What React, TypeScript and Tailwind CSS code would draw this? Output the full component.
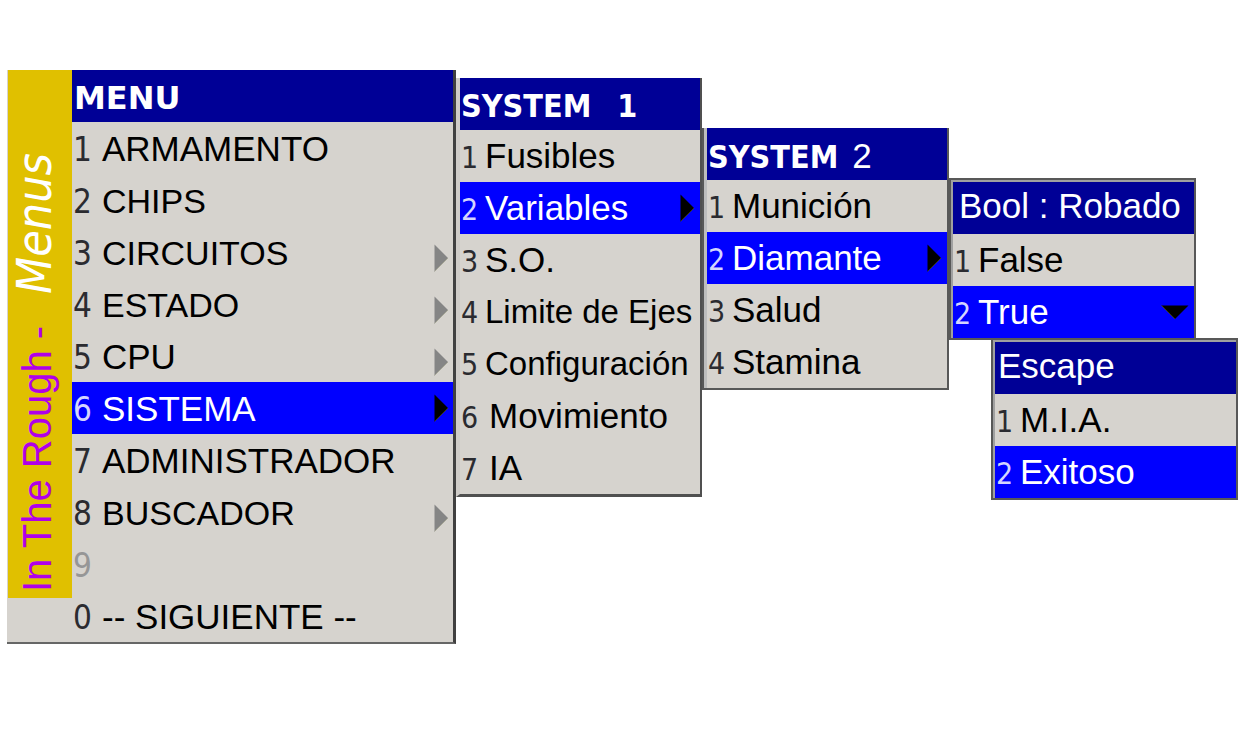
import React from "react";

type Item = {
  key: string;
  label: string;
  arrow?: "right" | "down";
  selected?: boolean;
  disabled?: boolean;
  indent?: boolean;
  size?: "text-[33px]" | "text-[34px]";
};

const mainItems: Item[] = [
  { key: "1", label: "ARMAMENTO" },
  { key: "2", label: "CHIPS", size: "text-[34px]" },
  { key: "3", label: "CIRCUITOS", arrow: "right", size: "text-[34px]" },
  { key: "4", label: "ESTADO", arrow: "right", size: "text-[34px]" },
  { key: "5", label: "CPU", arrow: "right" },
  { key: "6", label: "SISTEMA", arrow: "right", selected: true },
  { key: "7", label: "ADMINISTRADOR" },
  { key: "8", label: "BUSCADOR", arrow: "right", size: "text-[34px]" },
  { key: "9", label: "", disabled: true },
  { key: "0", label: "-- SIGUIENTE --" },
];

const systemOne: Item[] = [
  { key: "1", label: "Fusibles" },
  { key: "2", label: "Variables", arrow: "right", selected: true },
  { key: "3", label: "S.O." },
  { key: "4", label: "Limite de Ejes", size: "text-[33px]" },
  { key: "5", label: "Configuración", size: "text-[33px]" },
  { key: "6", label: "Movimiento", indent: true },
  { key: "7", label: "IA", indent: true },
];

const systemTwo: Item[] = [
  { key: "1", label: "Munición" },
  { key: "2", label: "Diamante", arrow: "right", selected: true },
  { key: "3", label: "Salud" },
  { key: "4", label: "Stamina" },
];

const stolen: Item[] = [
  { key: "1", label: "False" },
  { key: "2", label: "True", arrow: "down", selected: true },
];

const escape: Item[] = [
  { key: "1", label: "M.I.A." },
  { key: "2", label: "Exitoso", selected: true },
];

function Arrow({ direction, active }: { direction: "right" | "down"; active?: boolean }) {
  const fill = active ? "#000000" : "#858585";
  const edge = active ? "#3a3a20" : "#a5a595";
  return direction === "right" ? (
    <svg aria-hidden="true" width="15" height="28" viewBox="0 0 15 28" className="shrink-0">
      <path d="M0.5 0.5 L14 14 L0.5 27.5 Z" fill={fill} />
      <path d="M14 14 L0.5 27.5" stroke={edge} strokeWidth="1" />
    </svg>
  ) : (
    <svg aria-hidden="true" width="28" height="15" viewBox="0 0 28 15" className="shrink-0">
      <path d="M0.5 0.5 L27.5 0.5 L14 14 Z" fill={fill} />
      <path d="M0.5 0.5 L14 14" stroke={edge} strokeWidth="1" />
    </svg>
  );
}

function MenuList({ items, large, label }: { items: Item[]; large?: boolean; label: string }) {
  return (
    <ul aria-label={label}>
      {items.map((item) => (
        <li key={item.key}>
          <button
            type="button"
            disabled={item.disabled}
            className={`flex h-13 w-full items-center justify-between text-left leading-[52px] whitespace-nowrap ${
              large ? "pr-1" : "pr-[5px]"
            } ${item.selected ? "bg-[#0000ff] text-white" : "text-black"}`}
          >
            <span className={`flex items-baseline ${large ? "pt-[3px]" : "pt-px"}`}>
              <span
                className={`shrink-0 font-['DejaVu_Sans_Condensed','DejaVu_Sans',sans-serif] ${
                  large ? "w-[30px] pl-px text-[33px]" : "w-[25px] pl-px text-[30px]"
                } ${item.selected ? "text-[#d4d4ff]" : item.disabled ? "text-[#969696]" : "text-[#2b2b30]"}`}
              >
                {item.key}
              </span>
              <span className={`${item.size ?? "text-[35px]"} ${item.indent ? "pl-1" : ""}`}>{item.label}</span>
            </span>
            {item.arrow && (
              <span className={large && !item.selected ? "flex pt-3" : "flex"}>
                <Arrow direction={item.arrow} active={item.selected} />
              </span>
            )}
          </button>
        </li>
      ))}
    </ul>
  );
}

function Header({ children, raised }: { children: React.ReactNode; raised?: boolean }) {
  return (
    <h2
      className={`flex h-13 items-baseline bg-[#000096] pt-px text-[35px] whitespace-nowrap text-white ${
        raised ? "leading-[46px]" : "leading-[54px]"
      }`}
    >
      {children}
    </h2>
  );
}

function SystemTitle() {
  return (
    <span className="pl-px font-['DejaVu_Sans_Condensed','DejaVu_Sans',sans-serif] text-[32px] font-bold">
      SYSTEM
    </span>
  );
}

export default function App() {
  return (
    <main className="min-h-screen bg-white pt-[70px] pr-[11px] pb-16 pl-[7px] font-['Liberation_Sans',Arial,sans-serif]">
      <div className="grid grid-cols-[449fr_246fr_247fr_290fr] items-start">
        <nav
          aria-label="Menu"
          className="flex border-r-3 border-b-2 border-r-[#404040] border-b-[#666666] bg-[#d6d3ce]"
        >
          <div className="flex w-[65px] shrink-0 flex-col border-l border-[#d6d3ce]">
            <div className="flex flex-1 justify-center bg-[#e0c000]">
              <p className="rotate-180 ps-[6px] leading-[64px] whitespace-pre [text-orientation:sideways] [writing-mode:vertical-rl]">
                <span className="text-[40px] text-[#b000e8]">In The Rough -</span>
                <span className="ms-8 font-['DejaVu_Sans_Condensed','DejaVu_Sans',sans-serif] text-[48px] text-white italic">
                  Menus
                </span>
              </p>
            </div>
            <div className="h-11" />
          </div>
          <div className="min-w-0 flex-1">
            <Header>
              <span className="pl-[2px] font-['DejaVu_Sans',sans-serif] text-[32px] font-bold">MENU</span>
            </Header>
            <MenuList items={mainItems} label="Menu" large />
          </div>
        </nav>

        <section className="mt-2 border-r-2 border-b-3 border-l-4 border-[#505050] border-l-[#cfccc8] bg-[#d6d3ce]">
          <Header>
            <SystemTitle />
            <span className="pl-[26px] font-['DejaVu_Sans_Condensed','DejaVu_Sans',sans-serif] text-[32px] font-bold">
              1
            </span>
          </Header>
          <MenuList items={systemOne} label="System 1" />
        </section>

        <section className="mt-[58px] border-r-2 border-b-2 border-l-2 border-[#585858] bg-[#d6d3ce]">
          <div className="border-l-3 border-[#bdbdbd]">
            <Header>
              <SystemTitle />
              <span className="pl-[14px]">2</span>
            </Header>
            <MenuList items={systemTwo} label="System 2" />
          </div>
        </section>

        <div className="mt-[108px]">
          <section className="mr-[43px] border-2 border-[#585858] bg-[#d6d3ce]">
            <div className="border-t-2 border-l-2 border-[#a0a0a0]">
              <Header raised>
                <span className="pl-[6px]">Bool : Robado</span>
              </Header>
              <MenuList items={stolen} label="Bool : Robado" />
            </div>
          </section>
          <section className="-mt-0.5 mr-px ml-[42px] border-2 border-[#585858] bg-[#d6d3ce]">
            <div className="border-t-2 border-l-2 border-[#a0a0a0]">
              <Header raised>
                <span className="pl-[3px]">Escape</span>
              </Header>
              <MenuList items={escape} label="Escape" />
            </div>
          </section>
        </div>
      </div>
    </main>
  );
}
